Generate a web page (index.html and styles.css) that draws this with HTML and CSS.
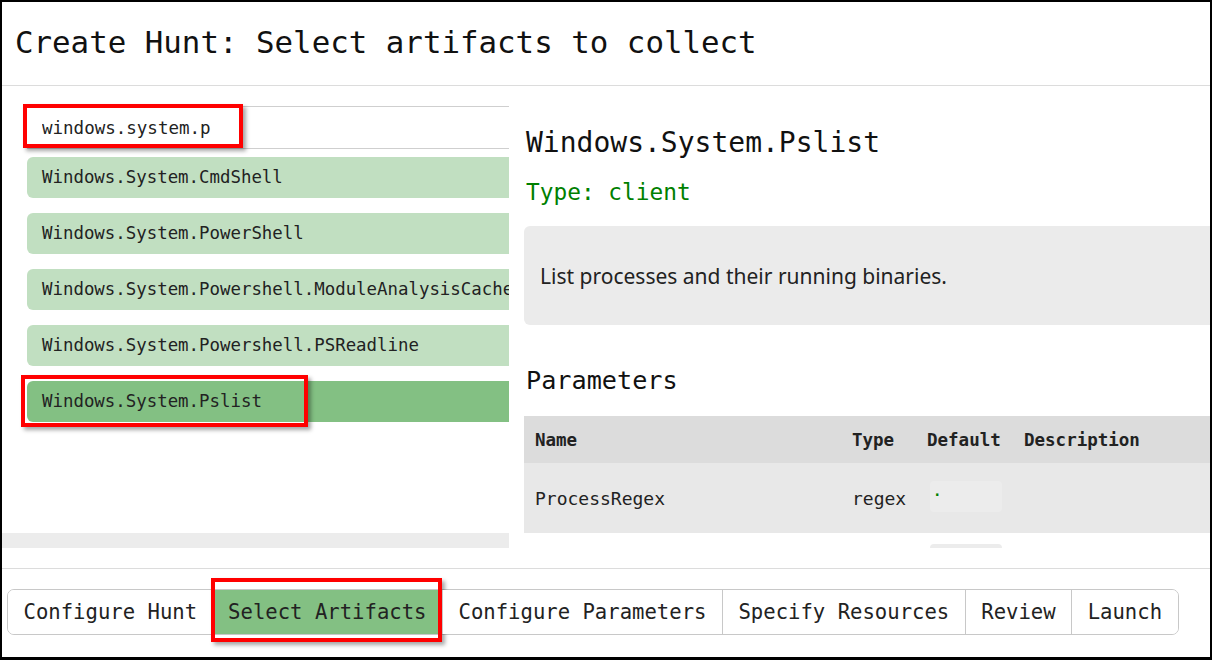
FILE: index.html
```html
<!DOCTYPE html>
<html lang="en">
<head>
<meta charset="utf-8">
<title>Create Hunt</title>
<link rel="stylesheet" href="styles.css">
</head>
<body>
<div class="frame">
  <header class="modal-header">
    <h1 class="modal-title">Create Hunt: Select artifacts to collect</h1>
  </header>
  <main class="modal-body">
    <section class="picker">
      <div class="picker-scroll">
        <div class="search">
          <input class="search-input" type="text" value="windows.system.p">
          <span class="callout callout-search"></span>
        </div>
        <ul class="artifact-list">
          <li class="artifact">Windows.System.CmdShell</li>
          <li class="artifact">Windows.System.PowerShell</li>
          <li class="artifact">Windows.System.Powershell.ModuleAnalysisCache</li>
          <li class="artifact">Windows.System.Powershell.PSReadline</li>
          <li class="artifact selected">Windows.System.Pslist<span class="callout callout-item"></span></li>
        </ul>
      </div>
      <div class="hscroll"></div>
    </section>
    <section class="details">
      <h2 class="artifact-name">Windows.System.Pslist</h2>
      <div class="artifact-type">Type: client</div>
      <div class="artifact-desc">List processes and their running binaries.</div>
      <h3 class="params-title">Parameters</h3>
      <table class="params">
        <thead>
          <tr><th class="c-name">Name</th><th class="c-type">Type</th><th class="c-def">Default</th><th class="c-desc">Description</th></tr>
        </thead>
        <tbody>
          <tr class="odd"><td>ProcessRegex</td><td>regex</td><td><pre class="def">.</pre></td><td></td></tr>
          <tr class="even"><td></td><td></td><td><div class="def-empty"></div></td><td></td></tr>
        </tbody>
      </table>
    </section>
  </main>
  <footer class="modal-footer">
    <nav class="steps">
      <button class="step">Configure Hunt</button>
      <button class="step active">Select Artifacts<span class="callout callout-step"></span></button>
      <button class="step">Configure Parameters</button>
      <button class="step">Specify Resources</button>
      <button class="step">Review</button>
      <button class="step">Launch</button>
    </nav>
  </footer>
</div>
</body>
</html>
```
FILE: styles.css
```css
* { box-sizing: border-box; }
html, body { margin: 0; padding: 0; background: #fff; }
body { font-family: "DejaVu Sans Mono", "Liberation Mono", monospace; color: #212121; }

.frame {
  width: 1212px;
  height: 660px;
  border: 2px solid #000;
  border-bottom-width: 3px;
  background: #fff;
  overflow: hidden;
  display: flex;
  flex-direction: column;
}

.modal-header {
  height: 84px;
  flex: none;
  border-bottom: 1px solid #dcdcdc;
  padding: 21px 0 0 13px;
}
.modal-title {
  margin: 0;
  font-size: 30.8px;
  line-height: 38px;
  font-weight: normal;
  color: #111;
}

.modal-body {
  height: 482px;
  flex: none;
  display: flex;
  padding-bottom: 20px;
}

.picker {
  width: 507px;
  flex: none;
  display: flex;
  flex-direction: column;
  overflow: hidden;
}
.picker-scroll {
  flex: 1;
  padding: 20px 0 0 25px;
  overflow: hidden;
}
.search { position: relative; width: 560px; }
.search-input {
  display: block;
  width: 100%;
  height: 43px;
  border: 0;
  border-top: 1px solid #cfcfcf;
  border-bottom: 1px solid #cfcfcf;
  padding: 0 15px;
  font-family: inherit;
  font-size: 17.5px;
  color: #222;
  background: #fff;
  outline: none;
}
.artifact-list {
  list-style: none;
  margin: 8px 0 0;
  padding: 0;
  width: 560px;
  display: flex;
  flex-direction: column;
  gap: 15px;
}
.artifact {
  position: relative;
  height: 41px;
  line-height: 41px;
  padding-left: 15px;
  border-radius: 6px;
  background: #c1dfc1;
  font-size: 17.4px;
  color: #222;
  white-space: nowrap;
}
.artifact.selected { background: #83c083; }
.hscroll {
  height: 15px;
  flex: none;
  background: #ececec;
}

.callout {
  position: absolute;
  border: 4px solid #f00;
  box-shadow: 3px 3px 4px rgba(0,0,0,0.35);
  pointer-events: none;
}
.callout-search { left: -4px; top: -2px; width: 220px; height: 44px; }
.callout-item { left: -6px; top: -6px; width: 287px; height: 52px; }
.callout-step { left: -2px; top: -12px; width: 231px; height: 64px; }

.details {
  flex: 1;
  min-width: 0;
  margin-left: 15px;
  overflow: hidden;
  padding-top: 40px;
}
.artifact-name {
  margin: 0 0 0 2px;
  font-size: 28px;
  line-height: 34px;
  font-weight: normal;
  color: #111;
  white-space: nowrap;
}
.artifact-type {
  margin: 18px 0 0 2px;
  font-size: 22.8px;
  line-height: 28px;
  color: #008000;
}
.artifact-desc {
  margin-top: 20px;
  width: 760px;
  height: 99px;
  padding: 0 16px;
  display: flex;
  align-items: center;
  background: #ebebeb;
  border-radius: 6px;
  font-family: "Noto Sans", "Open Sans", sans-serif;
  font-size: 21px;
  color: #222;
}
.params-title {
  margin: 41px 0 0 2px;
  font-size: 25.2px;
  line-height: 30px;
  font-weight: normal;
  color: #111;
}
.params {
  margin-top: 20px;
  width: 760px;
  border-collapse: collapse;
  table-layout: fixed;
  font-size: 18px;
  color: #222;
}
.params th, .params td {
  text-align: left;
  padding: 0 0 0 11px;
  white-space: nowrap;
}
.params th { font-weight: bold; height: 47px; background: #dcdcdc; font-size: 17.5px; }
.params td { height: 70px; vertical-align: middle; }
.params tr.odd td { background: #e8e8e8; }
.c-name { width: 317px; }
.c-type { width: 75px; }
.c-def { width: 97px; }
.params td pre.def {
  margin: -4px 0 0 3px;
  width: 72px;
  height: 31px;
  background: #ececec;
  border-radius: 4px;
  font-family: inherit;
  font-size: 14px;
  line-height: 20px;
  padding: 0 3px;
  color: #008000;
  font-weight: bold;
}
.params tr.even td { vertical-align: top; padding-top: 11px; }
.def-empty {
  margin-left: 3px;
  width: 72px;
  height: 31px;
  background: #ececec;
  border-radius: 4px;
}

.modal-footer {
  flex: 1;
  border-top: 1px solid #dcdcdc;
  padding: 20px 0 0 5px;
}
.steps {
  display: inline-flex;
  height: 46px;
  border: 1px solid #c8c8c8;
  border-radius: 7px;
}
.step {
  position: relative;
  height: 44px;
  padding: 0 15.5px;
  border: 0;
  border-left: 1px solid #c8c8c8;
  background: #fff;
  font-family: inherit;
  font-size: 20.6px;
  color: #222;
}
.step:first-child { border-left: 0; border-radius: 6px 0 0 6px; }
.step:last-child { border-radius: 0 6px 6px 0; }
.step.active { background: #83c083; border-left: 0; }
```
